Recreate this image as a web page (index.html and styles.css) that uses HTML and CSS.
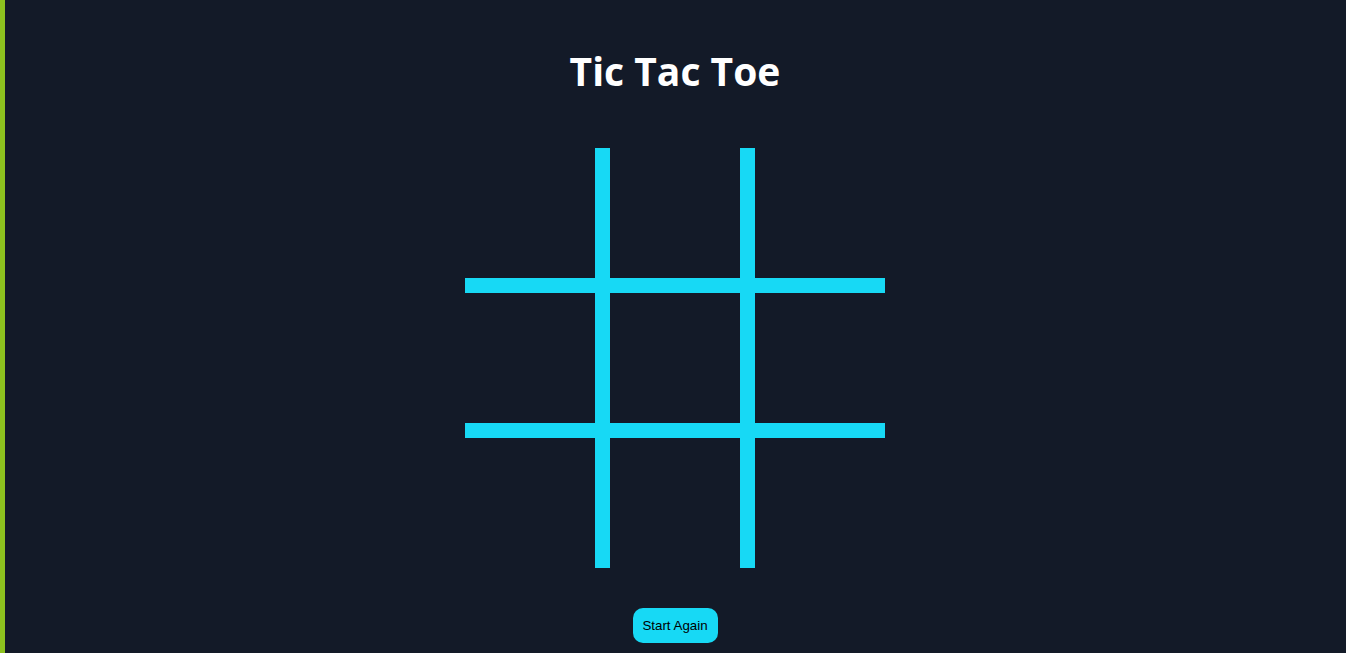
FILE: index.html
```html
<!DOCTYPE html>
<html lang="en">
<head>
<meta charset="utf-8">
<title>Tic Tac Toe</title>
<link rel="stylesheet" href="styles.css">
</head>
<body>
<main class="app">
  <h1 class="title">Tic Tac Toe</h1>
  <div class="board">
    <div class="cell"></div><div class="cell"></div><div class="cell"></div>
    <div class="cell"></div><div class="cell"></div><div class="cell"></div>
    <div class="cell"></div><div class="cell"></div><div class="cell"></div>
  </div>
  <button class="restart">Start Again</button>
</main>
</body>
</html>
```
FILE: styles.css
```css
html, body {
  margin: 0;
  height: 100%;
}
body {
  background: #131a28;
  border-left: 5px solid #8dc21f;
  padding-right: 1px;
  box-sizing: border-box;
  overflow: hidden;
}
.app {
  display: flex;
  flex-direction: column;
  align-items: center;
}
.title {
  margin: 43px 0 0;
  height: 56px;
  line-height: 56px;
  font-family: "Open Sans", "Noto Sans", sans-serif;
  font-weight: 700;
  font-size: 39px;
  color: #ffffff;
}
.board {
  margin-top: 49px;
  display: grid;
  grid-template-columns: repeat(3, 130px);
  grid-template-rows: repeat(3, 130px);
  gap: 15px;
  background: #17d9f5;
}
.cell {
  background: #131a28;
}
.restart {
  margin-top: 40px;
  width: 85px;
  height: 35px;
  border: none;
  border-radius: 10px;
  background: #17d9f5;
  color: #000;
  font-family: "Liberation Sans", Arial, sans-serif;
  font-size: 13.333px;
  padding: 0;
}
```
